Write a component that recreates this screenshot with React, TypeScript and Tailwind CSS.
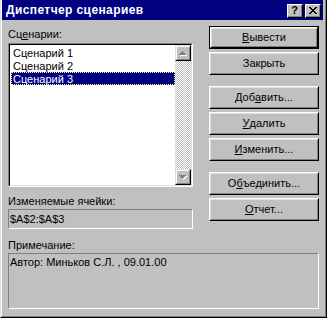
import React from 'react';

const FONT = "font-['Liberation_Sans',Arial,sans-serif]";

// мнемоника: подчёркнутая буква
const Mn = ({ text, at }: { text: string; at: number }) => {
  if (at < 0) return <>{text}</>;
  return (
    <>
      {text.slice(0, at)}
      <span className="underline underline-offset-[1px]">{text[at]}</span>
      {text.slice(at + 1)}
    </>
  );
};

const Btn = ({ label, at, isDefault }: { label: string; at: number; isDefault?: boolean }) => (
  <div className={`h-[23px] w-[110px] ${isDefault ? 'border border-black' : ''}`}>
    <div className="h-full w-full border border-t-white border-l-white border-r-black border-b-black">
      <div className="flex h-full w-full items-center justify-center border border-t-[#dfdfdf] border-l-[#dfdfdf] border-r-[#808080] border-b-[#808080] bg-[#c0c0c0] text-[11px] leading-none text-black">
        <Mn text={label} at={at} />
      </div>
    </div>
  </div>
);

const Arrow = ({ up }: { up?: boolean }) => (
  <div className="h-[16px] w-[16px] border border-t-[#dfdfdf] border-l-[#dfdfdf] border-r-black border-b-black">
    <div className="flex h-full w-full items-center justify-center border border-t-white border-l-white border-r-[#808080] border-b-[#808080] bg-[#c0c0c0]">
      <svg width="8" height="5" viewBox="0 0 8 5" shapeRendering="crispEdges">
        {up ? (
          <>
            <path d="M4 1h1v1h1v1h1v1h1v1H1V4h1z" fill="#ffffff" />
            <path d="M3 0h1v1h1v1h1v1h1v1H0V3h1V2h1V1h1z" fill="#808080" />
          </>
        ) : (
          <>
            <path d="M1 1h7v1H7v1H6v1H5v1H4V4H3V3H2V2H1z" fill="#ffffff" />
            <path d="M0 0h7v1H6v1H5v1H4v1H3V3H2V2H1V1H0z" fill="#808080" />
          </>
        )}
      </svg>
    </div>
  </div>
);

const items = ['Сценарий 1', 'Сценарий 2', 'Сценарий 3'];

export default function App() {
  return (
    <div className={`${FONT} h-[318px] w-[327px] border-b border-l border-r border-b-black border-l-[#dfdfdf] border-r-black bg-[#c0c0c0] text-black`}>
      <div className="flex h-full flex-col border-b border-l border-r border-b-[#808080] border-l-white border-r-[#808080]">
        {/* заголовок */}
        <div className="mr-[2px] flex h-[20px] items-center bg-[#000080] pl-[4px] pr-[2px]">
          <span className="text-[12px] font-bold leading-none tracking-[0.4px] text-white">Диспетчер сценариев</span>
          <div className="ml-auto flex gap-[2px] pt-[1px]">
            <div className="h-[14px] w-[16px] border border-t-white border-l-white border-r-black border-b-black bg-[#c0c0c0]">
              <div className="flex h-full w-full items-center justify-center border-b border-r border-b-[#808080] border-r-[#808080] text-[11px] font-bold leading-none">?</div>
            </div>
            <div className="h-[14px] w-[16px] border border-t-white border-l-white border-r-black border-b-black bg-[#c0c0c0]">
              <div className="flex h-full w-full items-center justify-center border-b border-r border-b-[#808080] border-r-[#808080]">
                <svg width="8" height="7" viewBox="0 0 8 7" shapeRendering="crispEdges">
                  <path d="M0 0h2v1h1v1h2V1h1V0h2v1H7v1H6v1H5v1h1v1h1v1h1v1H6V6H5V5H3v1H2v1H0V6h1V5h1V4h1V3H2V2H1V1H0z" fill="#000" />
                </svg>
              </div>
            </div>
          </div>
        </div>

        <div className="flex flex-1 flex-col px-[6px]">
          <div className="flex">
            {/* левая колонка */}
            <div className="flex w-[185px] flex-col pt-[8px]">
              <div className="h-[13px] text-[11px] leading-[13px]">
                <Mn text="Сценарии:" at={2} />
              </div>
              <div className="mt-[2px] h-[144px] border border-b-white border-l-[#808080] border-r-white border-t-[#808080]">
                <div className="flex h-full border border-b-[#dfdfdf] border-l-black border-r-[#dfdfdf] border-t-black bg-white">
                  <div className="flex-1 pl-[1px] pt-[1px]">
                    {items.map((it, i) => (
                      <div
                        key={it}
                        className={`h-[13px] pl-[1px] text-[11px] leading-[12px] ${
                          i === 2 ? 'border border-dotted border-[#ffff80] bg-[#000080] text-white' : 'border border-transparent'
                        }`}
                      >
                        {it}
                      </div>
                    ))}
                  </div>
                  <div className="flex w-[16px] flex-col">
                    <Arrow up />
                    <div className="flex-1 bg-[image:repeating-conic-gradient(#c0c0c0_0_25%,#ffffff_0_50%)] bg-[length:2px_2px]" />
                    <Arrow />
                  </div>
                </div>
              </div>

              <div className="mt-[8px] h-[13px] text-[11px] leading-[13px]">Изменяемые ячейки:</div>
              <div className="mt-[1px] flex h-[20px] items-center border border-b-white border-l-[#808080] border-r-white border-t-[#808080] pl-[1px] text-[11px]">
                $A$2:$A$3
              </div>
            </div>

            {/* кнопки */}
            <div className="ml-auto flex flex-col pt-[6px]">
              <Btn label="Вывести" at={0} isDefault />
              <div className="mt-[3px]"><Btn label="Закрыть" at={-1} /></div>
              <div className="mt-[11px]"><Btn label="Добавить..." at={3} /></div>
              <div className="mt-[3px]"><Btn label="Удалить" at={0} /></div>
              <div className="mt-[3px]"><Btn label="Изменить..." at={0} /></div>
              <div className="mt-[11px]"><Btn label="Объединить..." at={1} /></div>
              <div className="mt-[3px]"><Btn label="Отчет..." at={0} /></div>
            </div>
          </div>

          <div className="mt-[10px] h-[13px] text-[11px] leading-[13px]">Примечание:</div>
          <div className="mt-[1px] h-[56px] border border-b-white border-l-[#808080] border-r-white border-t-[#808080] pl-[1px] pt-[2px] text-[11px] leading-[13px]">
            Автор: Миньков С.Л. , 09.01.00
          </div>
        </div>
      </div>
    </div>
  );
}
